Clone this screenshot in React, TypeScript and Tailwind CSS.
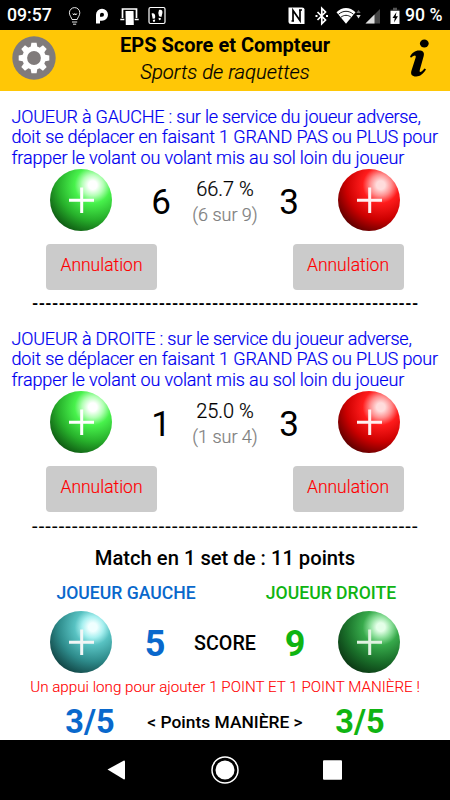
import React from "react";

type BallProps = { id: string; light: string; glow: string; mid: string; base: string; dark: string; plus: string };

function Ball({ id, light, glow, mid, base, dark, plus }: BallProps) {
  return (
    <svg className="block h-[62px] w-[62px] shrink-0" viewBox="0 0 62 62">
      <defs>
        <radialGradient id={id} cx="0.69" cy="0.26" r="0.86">
          <stop offset="0" stopColor={light} />
          <stop offset="0.08" stopColor={light} />
          <stop offset="0.2" stopColor={glow} />
          <stop offset="0.34" stopColor={mid} />
          <stop offset="0.65" stopColor={base} />
          <stop offset="1" stopColor={dark} />
        </radialGradient>
      </defs>
      <circle cx="31" cy="31" r="31" fill={`url(#${id})`} />
      <path d="M19 31.3H44M31.7 18.5V44" stroke={plus} strokeWidth="3" fill="none" />
    </svg>
  );
}

function CancelButton() {
  return (
    <button className="h-[46px] w-[111px] rounded-[4px] bg-[#cbcbcb] pb-[3px] text-[17.5px] font-light leading-none text-[#ff0000] [-webkit-text-stroke:0.15px]">
      Annulation
    </button>
  );
}

type PlayerProps = {
  side: string;
  id: string;
  good: string;
  bad: string;
  percent: string;
  detail: string;
  dash: string;
};

function Player({ side, id, good, bad, percent, detail, dash }: PlayerProps) {
  return (
    <section className="h-[222px]">
      <p className="h-[62px] whitespace-nowrap pl-[11.5px] text-[18px] font-light leading-[20.4px] text-[#0000f0] [-webkit-text-stroke:0.2px]">
        <span className="tracking-[-0.2px]">{side} : sur le service du joueur adverse,</span>
        <br />
        <span className="tracking-[-0.13px]">doit se déplacer en faisant 1 GRAND PAS ou PLUS pour</span>
        <br />
        <span className="tracking-[-0.12px]">frapper le volant ou volant mis au sol loin du joueur</span>
      </p>
      <div className="flex h-[62px] items-center pl-[50px]">
        <Ball id={id + "g"} light="#ffffff" glow="#b4ffb6" mid="#48f24c" base="#27b02b" dark="#0a4a0e" plus="#ffffff" />
        <div className="w-[98px] pt-[4px] text-center text-[35px] leading-none">{good}</div>
        <div className="-ml-[20px] w-[70px] whitespace-nowrap pt-[2px] text-center font-light [-webkit-text-stroke:0.2px]">
          <div className="text-[20px] leading-[26px]">{percent}</div>
          <div className="text-[18px] leading-[25px] text-[#808080]">{detail}</div>
        </div>
        <div className="w-[58px] pt-[4px] text-center text-[35px] leading-none">{bad}</div>
        <div className="ml-[20px]">
          <Ball id={id + "r"} light="#ffdcdc" glow="#ff9090" mid="#ff1c1c" base="#cc0000" dark="#480000" plus="#fff0f0" />
        </div>
      </div>
      <div className="flex justify-between pl-[46px] pr-[46.5px] pt-[13px]">
        <CancelButton />
        <CancelButton />
      </div>
      <div className={"h-[39px] overflow-hidden whitespace-nowrap pl-[32px] leading-[28px] " + dash}>
        {"-".repeat(58)}
      </div>
    </section>
  );
}

function StatusBar() {
  return (
    <div className="flex h-[30px] items-center bg-black pl-[7px] pt-[1px] text-[17.7px] font-medium leading-none text-white">
      <span className="w-[60px]">09:57</span>
      <svg className="h-[30px] w-[103px]" viewBox="67 0 103 30" fill="none" stroke="#fff">
        <path d="M72 18.5c-.4-2-2.6-3.8-2.6-6.7a5.2 5.2 0 0 1 10.4 0c0 2.900-2.200 4.700-2.600 6.700zM72 21h5.200M73 23.200h3.200M72.800 12.500l1 1.500 1-1.500 1 1.500 1-1.500" strokeWidth="0.900" />
        <path d="M98 22.500v-8.700a4 4 0 1 1 4 4h-3" strokeWidth="4" />
        <path d="M122.500 17V8h14v9M120.300 18.500h4M134.700 18.500h4" strokeWidth="1.700" />
        <path d="M125.500 10h8l.3 14h-8z" fill="#fff" stroke="none" />
        <rect x="149" y="6.500" width="16" height="16" rx="1.500" strokeWidth="1.200" />
        <path d="M151.600 12.500c2.400-1 3.800 1 3.600 3.500l-.3 1.500-2.200.3zM152.800 18.900l2.300-.3c.4 2.900-2 3.300-2.300.3zM159 9c2.600-1 3.800.7 3.400 3l-1 3.900-2.400-.6-.7-3.300zM158.700 16.800l2.300.5c-.3 3-2.900 2.200-2.300-.5z" fill="#fff" stroke="none" />
      </svg>
      <svg className="ml-[118px] h-[30px] w-[115px]" viewBox="288 0 115 30" fill="none" stroke="#fff">
        <path d="M288.500 6.500h13.500q2.500 0 2.500 2v14.500h-13.500q-2.500 0-2.500-2z" fill="#fff" stroke="none" />
        <path d="M293 20.500v-11l7 10v-10.500M291.500 20h2.500M299 9h3" stroke="#000" strokeWidth="1.700" />
        <path d="M317.500 11l8 8-3.700 3.700V7.300l3.700 3.700-8 8" strokeWidth="1.700" />
        <path d="M315.500 14h2v2h-2zM326 14h2v2h-2z" fill="#fff" stroke="none" />
        <path d="M336.500 11.200c5.700-5.700 13.300-5.700 19 0L346 22.800z" fill="#fff" stroke="none" />
        <path d="M338.500 13.300c4.500-4 10.500-4 15 0M341 16.200c3-2.500 7-2.500 10 0" stroke="#000" strokeWidth=".9" />
        <path d="M356.300 12l2.200-3 2.200 3z" fill="#666" stroke="none" />
        <path d="M356.300 14h4.400l-2.200 3.500z" fill="#ddd" stroke="none" />
        <path d="M365.500 22.500L380 8v14.500z" fill="#444" stroke="none" />
        <path d="M365.500 22.500l9-9v9z" fill="#ddd" stroke="none" />
        <path d="M393 6.700h4v2h-4zM390.500 8.700h9V10h-9z" fill="#555" stroke="none" />
        <path d="M390.500 10h9v13h-9z" fill="#fff" stroke="none" />
        <path d="M396.500 11l-4 6h2.300l-.8 4.500 4-6.300h-2.300z" fill="#000" stroke="none" />
      </svg>
      <span className="ml-[2px] whitespace-nowrap">90 %</span>
    </div>
  );
}

function Gear() {
  return (
    <svg className="h-[44px] w-[44px]" viewBox="-22 -22 44 44">
      <circle r="21.700" fill="#807b7b" />
      <g fill="#fff">
        {[0, 45, 90, 135, 180, 225, 270, 315].map((a) => (
          <path key={a} d="M-3.500 -10L-2.600 -15.300H2.600L3.500 -10z" transform={`rotate(${a})`} />
        ))}
        <circle r="11.700" />
      </g>
      <circle r="6.900" fill="#807b7b" />
    </svg>
  );
}

export default function App() {
  return (
    <div className="h-[800px] w-[450px] overflow-hidden bg-white font-['Roboto',sans-serif] text-black antialiased">
      <StatusBar />
      <header className="flex h-[61px] bg-[#ffc706]">
        <div className="w-[75px] pl-[12px] pt-[6px]">
          <Gear />
        </div>
        <div className="w-[300px] whitespace-nowrap text-center">
          <h1 className="pt-[3px] text-[20px] font-bold leading-[25px]">EPS Score et Compteur</h1>
          <div className="pt-[2px] text-[20.3px] font-light italic leading-[25px] [-webkit-text-stroke:0.2px]">Sports de raquettes</div>
        </div>
        <div className="w-[75px] pl-[34px] pt-[8px]">
          <svg className="h-[40px] w-[20px]" viewBox="0 0 20 40">
            <ellipse cx="15.300" cy="5.500" rx="4.400" ry="4" />
            <path d="M1 18.500c2-3.500 5-6 9-6 4 0 5.700 2 4.700 5.500L10.800 32c-.8 3 1.200 2.700 4.700-1.500l1.500.8C14.500 36 11 38.500 7.200 38.500c-4.500 0-5.900-2.300-4.700-6L6.500 20c1-3-.8-3.500-4.500-.3z" />
          </svg>
        </div>
      </header>
      <main className="h-[649px] pt-[16px]">
        <Player side="JOUEUR à GAUCHE" id="a" good="6" bad="3" percent="66.7 %" detail="(6 sur 9)" dash="text-[16px] font-bold tracking-[0.36px]" />
        <Player side="JOUEUR à DROITE" id="b" good="1" bad="3" percent="25.0 %" detail="(1 sur 4)" dash="text-[20px] font-normal tracking-[1.14px]" />
        <div className="h-[29px] text-center text-[20.2px] font-medium leading-[15px]">Match en 1 set de : 11 points</div>
        <div className="flex h-[31px] whitespace-nowrap text-[17.6px] font-medium leading-[26px]">
          <div className="w-[252px] text-center text-[#0968cc]">JOUEUR GAUCHE</div>
          <div className="w-[158px] text-center text-[#0fb412]">JOUEUR DROITE</div>
        </div>
        <div className="flex h-[62px] items-center pl-[50px]">
          <Ball id="cg" light="#f0ffff" glow="#a8f0f0" mid="#58c2c2" base="#2d8a8a" dark="#0c3838" plus="#f2f6f6" />
          <div className="w-[86px] pt-[4px] text-center text-[36px] font-bold leading-none text-[#0968cc]">5</div>
          <div className="-ml-[7px] w-[68px] pt-[4px] text-center text-[19.700px] font-medium leading-none">SCORE</div>
          <div className="-ml-[7px] w-[86px] pt-[4px] text-center text-[36px] font-bold leading-none text-[#0fb412]">9</div>
          <Ball id="cr" light="#e4ffe8" glow="#8ee09c" mid="#37aa4b" base="#1a702a" dark="#082e10" plus="#e0f2e0" />
        </div>
        <div className="h-[28px] whitespace-nowrap text-center text-[15.2px] font-light leading-[28px] text-[#ff0000] [-webkit-text-stroke:0.1px]">
          Un appui long pour ajouter 1 POINT ET 1 POINT MANIÈRE !
        </div>
        <div className="flex h-[39px] items-center whitespace-nowrap pt-[4px] text-center font-bold">
          <div className="ml-[50px] w-[80px] text-[32.5px] leading-none text-[#0968cc]">3/5</div>
          <div className="w-[190px] text-[17.4px] font-medium leading-none">&lt; Points MANIÈRE &gt;</div>
          <div className="w-[80px] text-[32.5px] leading-none text-[#0fb412]">3/5</div>
        </div>
      </main>
      <nav className="flex h-[60px] items-center bg-black">
        <svg className="h-[60px] w-[450px]" viewBox="0 0 450 60">
          <path d="M107.500 29.500L124 20.500q1 0 1 1v17q0 1-1 1z" fill="#fff" />
          <circle cx="225" cy="30" r="13" fill="none" stroke="#fff" strokeWidth="1.500" />
          <circle cx="225" cy="30" r="9.500" fill="#fff" />
          <rect x="323" y="20.300" width="19" height="19.400" rx="1" fill="#fff" />
        </svg>
      </nav>
    </div>
  );
}
